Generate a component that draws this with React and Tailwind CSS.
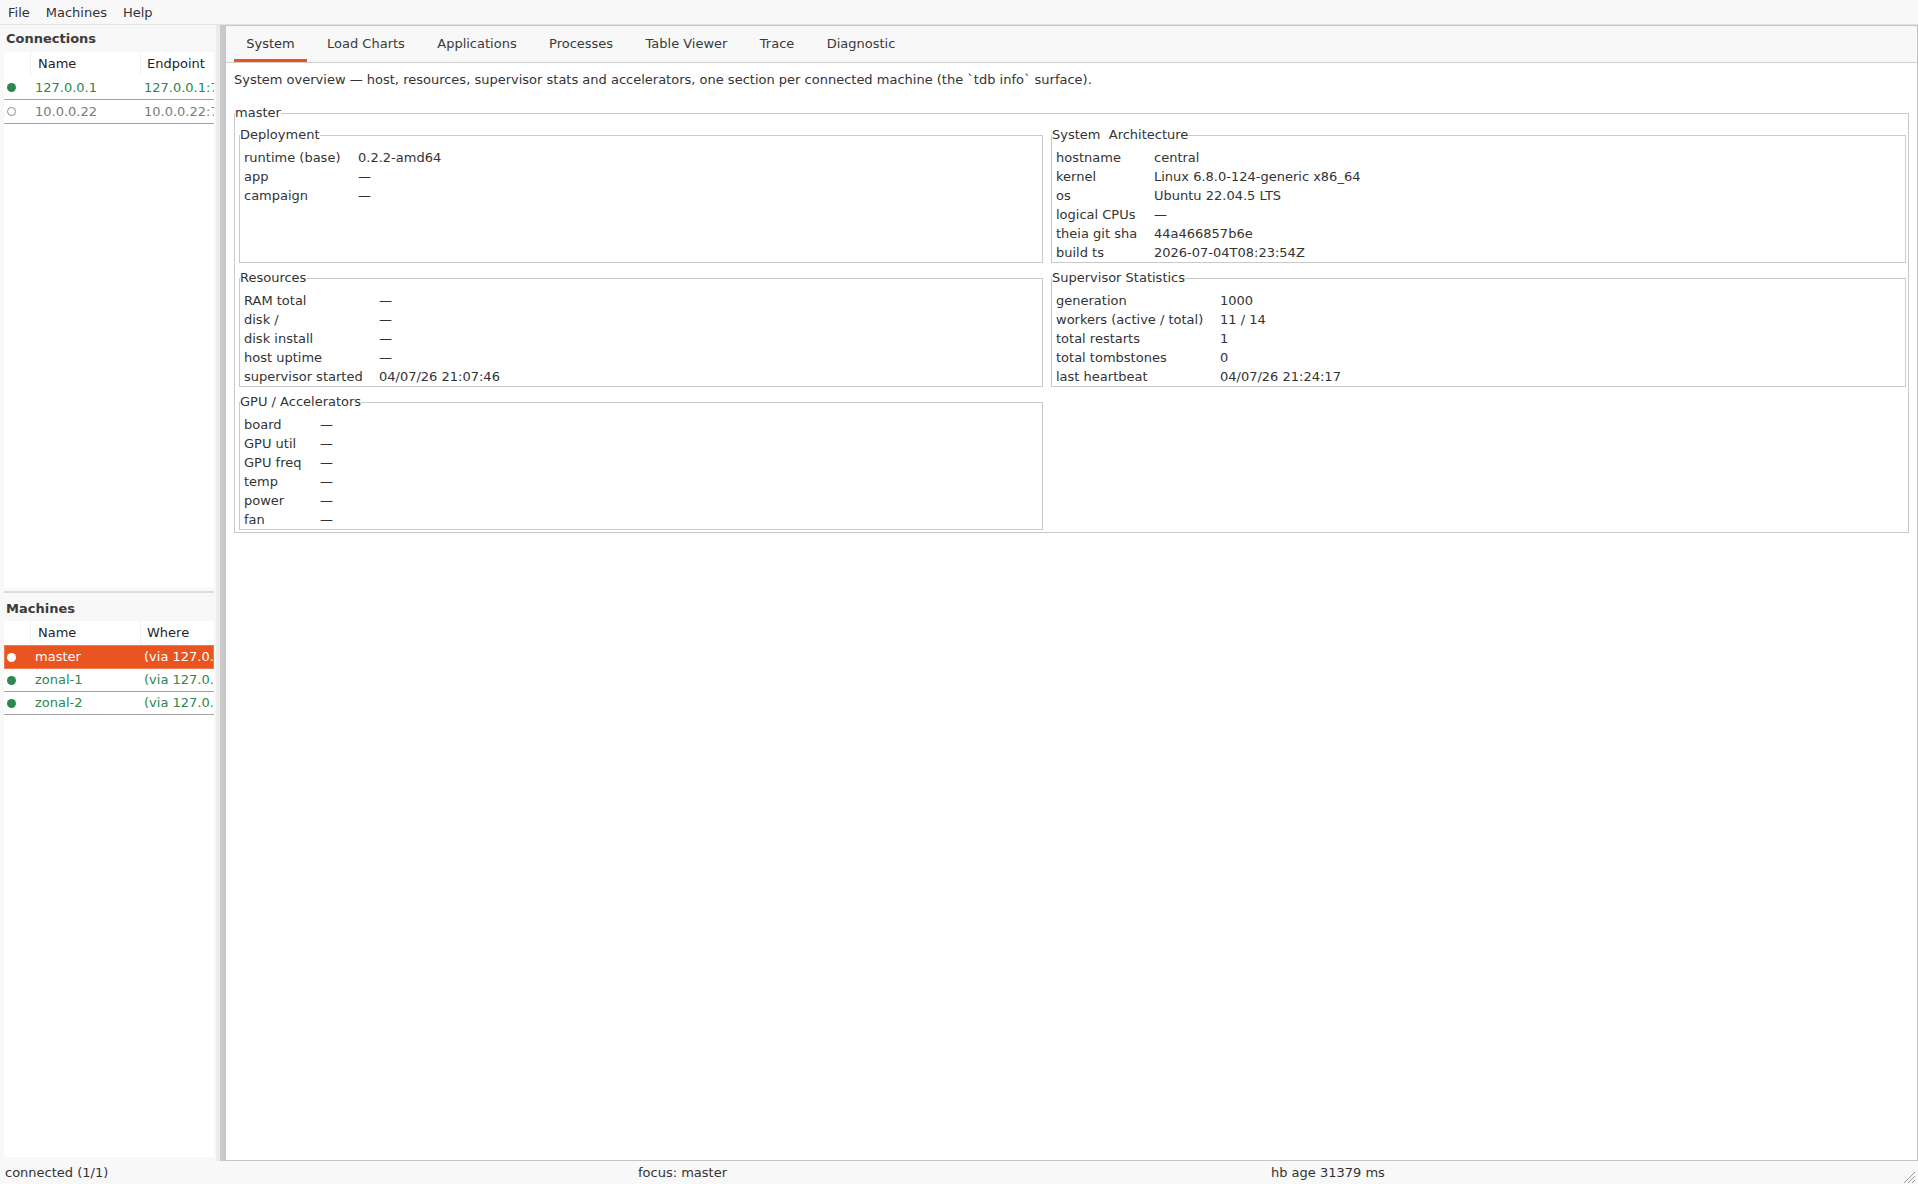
import React from 'react';

const tabs = ['System', 'Load Charts', 'Applications', 'Processes', 'Table Viewer', 'Trace', 'Diagnostic'];

const connections = [
  { name: '127.0.0.1', endpoint: '127.0.0.1:7000', up: true },
  { name: '10.0.0.22', endpoint: '10.0.0.22:7000', up: false },
];

const machines = [
  { name: 'master', where: '(via 127.0.0.1)', selected: true },
  { name: 'zonal-1', where: '(via 127.0.0.1)' },
  { name: 'zonal-2', where: '(via 127.0.0.1)' },
];

const sections = {
  deployment: {
    title: 'Deployment',
    labelW: 'w-[114px]',
    rows: [
      ['runtime (base)', '0.2.2-amd64'],
      ['app', '—'],
      ['campaign', '—'],
    ],
  },
  arch: {
    title: 'System  Architecture',
    labelW: 'w-[98px]',
    rows: [
      ['hostname', 'central'],
      ['kernel', 'Linux 6.8.0-124-generic x86_64'],
      ['os', 'Ubuntu 22.04.5 LTS'],
      ['logical CPUs', '—'],
      ['theia git sha', '44a466857b6e'],
      ['build ts', '2026-07-04T08:23:54Z'],
    ],
  },
  resources: {
    title: 'Resources',
    labelW: 'w-[135px]',
    rows: [
      ['RAM total', '—'],
      ['disk /', '—'],
      ['disk install', '—'],
      ['host uptime', '—'],
      ['supervisor started', '04/07/26 21:07:46'],
    ],
  },
  supervisor: {
    title: 'Supervisor Statistics',
    labelW: 'w-[164px]',
    rows: [
      ['generation', '1000'],
      ['workers (active / total)', '11 / 14'],
      ['total restarts', '1'],
      ['total tombstones', '0'],
      ['last heartbeat', '04/07/26 21:24:17'],
    ],
  },
  gpu: {
    title: 'GPU / Accelerators',
    labelW: 'w-[76px]',
    rows: [
      ['board', '—'],
      ['GPU util', '—'],
      ['GPU freq', '—'],
      ['temp', '—'],
      ['power', '—'],
      ['fan', '—'],
    ],
  },
};

function Group({ section }) {
  return (
    <fieldset className="h-full border border-[#c9c9c9] p-0">
      <legend className="leading-[16px] whitespace-pre">{section.title}</legend>
      <div className="pl-[4px] pt-[5px]">
        {section.rows.map(([k, v]) => (
          <div key={k} className="flex h-[19px] items-center whitespace-nowrap">
            <span className={`${section.labelW} shrink-0`}>{k}</span>
            <span>{v}</span>
          </div>
        ))}
      </div>
    </fieldset>
  );
}

function Dot({ filled, white }) {
  if (white) return <span className="block h-[9px] w-[9px] rounded-full bg-white" />;
  if (filled) return <span className="block h-[9px] w-[9px] rounded-full bg-[#2e8753]" />;
  return <span className="block h-[9px] w-[9px] rounded-full border border-[#8a8a8a] bg-white" />;
}

function Row({ dot, name, other, className }) {
  return (
    <div className={`flex items-center overflow-hidden whitespace-nowrap ${className}`}>
      <div className="flex w-[27px] shrink-0 pl-[3px]">{dot}</div>
      <div className="w-[110px] shrink-0 pl-[4px]">{name}</div>
      <div className="min-w-0 flex-1 overflow-hidden pl-[3px]">{other}</div>
    </div>
  );
}

function ListTable({ cols, children }) {
  return (
    <div className="h-[536px] overflow-hidden bg-white">
      <div className="flex h-[24px] items-center text-[#1e1e1e]">
        <div className="h-full w-[27px] shrink-0 border-r border-[#f0f0f0]" />
        <div className="flex h-full w-[110px] shrink-0 items-center border-r border-[#f0f0f0] pl-[7px]">{cols[0]}</div>
        <div className="flex h-full flex-1 items-center pl-[6px]">{cols[1]}</div>
      </div>
      {children}
    </div>
  );
}

export default function App() {
  return (
    <div className="flex h-[1184px] w-[1918px] flex-col overflow-hidden bg-[#f8f8f8] font-['DejaVu_Sans',sans-serif] text-[13px] text-[#333333]">
      {/* menu bar */}
      <div className="flex h-[25px] items-center border-b border-[#e3e3e3] pt-[1px] text-[#333]">
        {['File', 'Machines', 'Help'].map((m) => (
          <span key={m} className="px-[8px]">{m}</span>
        ))}
      </div>

      <div className="flex flex-1 overflow-hidden">
        {/* left side */}
        <div className="flex w-[216px] shrink-0 flex-col pl-[4px] pr-[2px]">
          <div className="flex h-[27px] items-center pl-[2px] font-bold text-[#3b3b3b]">Connections</div>
          <ListTable cols={['Name', 'Endpoint']}>
            {connections.map((c) => (
              <Row
                key={c.name}
                dot={<Dot filled={c.up} />}
                name={c.name}
                other={c.endpoint}
                className={`h-[24px] border-b border-[#a3a3a3] ${c.up ? 'text-[#2a8751]' : 'text-[#7b7b7b]'}`}
              />
            ))}
          </ListTable>
          <div className="flex h-[8px] items-center">
            <div className="h-[2px] w-full bg-[#dcdcdc]" />
          </div>
          <div className="flex h-[25px] items-center pl-[2px] font-bold text-[#3b3b3b]">Machines</div>
          <ListTable cols={['Name', 'Where']}>
            {machines.map((m) =>
              m.selected ? (
                <Row
                  key={m.name}
                  dot={<Dot white />}
                  name={m.name}
                  other={m.where}
                  className="h-[24px] bg-[#e95420] text-white shadow-[inset_0_0_0_1px_#f07a4f]"
                />
              ) : (
                <Row
                  key={m.name}
                  dot={<Dot filled />}
                  name={m.name}
                  other={m.where}
                  className="h-[23px] border-b border-[#a3a3a3] text-[#2a8751]"
                />
              )
            )}
          </ListTable>
        </div>

        {/* splitter */}
        <div className="w-[4px] shrink-0 bg-[#ececec]" />
        <div className="w-[5px] shrink-0 bg-[#c9c9c9]" />

        {/* main panel */}
        <div className="flex flex-1 flex-col border border-[#c4c4c4] bg-white">
          <div className="flex h-[37px] items-stretch border-b border-[#cfcfcf] bg-[#f8f8f8] pl-[4px]">
            {tabs.map((t, i) => (
              <div
                key={t}
                className={`mx-[4px] flex items-center border-b-[3px] px-[12.2px] pt-[3px] ${i === 0 ? 'border-[#e95420] text-[#333]' : 'border-transparent text-[#3a3a3a]'}`}
              >
                {t}
              </div>
            ))}
          </div>

          <div className="px-[8px]">
            <div className="pt-[9px] leading-[16px]">
              System overview — host, resources, supervisor stats and accelerators, one section per connected machine (the `tdb info` surface).
            </div>

            <fieldset className="mt-[17px] border border-[#c9c9c9] p-0">
              <legend className="leading-[16px]">master</legend>
              <div className="grid grid-cols-[804px_1fr] gap-x-[8px] gap-y-[7px] pb-[2px] pl-[4px] pr-[2px] pt-[6px]">
                <Group section={sections.deployment} />
                <Group section={sections.arch} />
                <Group section={sections.resources} />
                <Group section={sections.supervisor} />
                <Group section={sections.gpu} />
                <div />
              </div>
            </fieldset>
          </div>
        </div>
      </div>

      {/* status bar */}
      <div className="flex h-[23px] items-center pl-[5px] text-[#333]">
        <div className="w-[633px]">connected (1/1)</div>
        <div className="w-[633px]">focus: master</div>
        <div className="flex-1">hb age 31379 ms</div>
        <svg width="14" height="14" viewBox="0 0 14 14" className="mr-[2px] mt-[8px]">
          <path d="M13 2 L2 13 M13 6 L6 13 M13 10 L10 13" stroke="#9a9a9a" strokeWidth="1" />
        </svg>
      </div>
    </div>
  );
}
